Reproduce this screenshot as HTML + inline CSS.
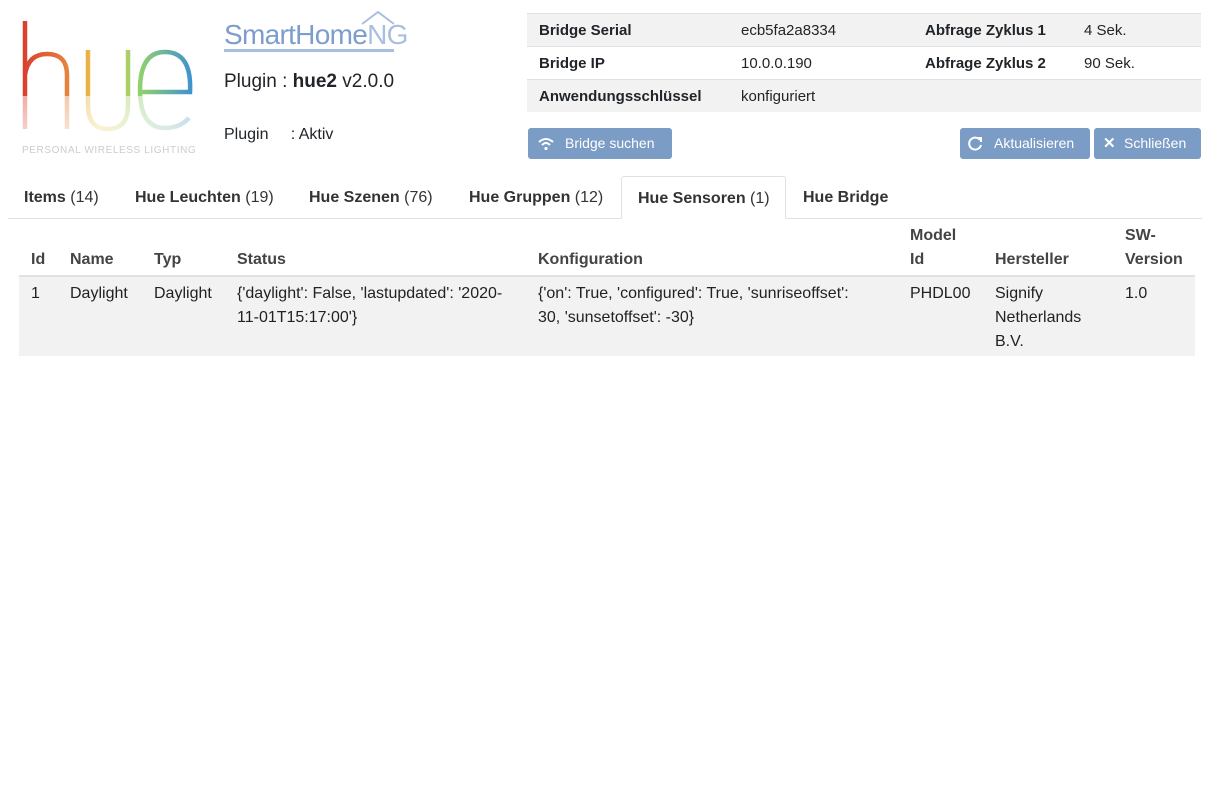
<!DOCTYPE html>
<html><head><meta charset="utf-8"><style>
body{margin:0;background:#fff;font-family:"Liberation Sans",Arial,sans-serif;color:#212529;font-size:15px;width:1211px;height:803px;position:relative;overflow:hidden}
.abs{position:absolute}
table.info{position:absolute;left:527px;top:13px;width:674px;border-collapse:collapse}
table.info td{height:32px;padding:0 0 0 12px;border-top:1px solid #dee2e6;font-size:15px}
table.info tr:nth-child(odd){background:#f2f2f2}
.btn{position:absolute;top:128px;height:31px;background:#7b9cc5;color:#fff;border-radius:3px;font-size:14px;line-height:31px;box-sizing:border-box}
.tabs{position:absolute;left:8px;top:176px;width:1194px;height:42px;border-bottom:1px solid #dee2e6}
.tab{position:absolute;top:0;height:42px;line-height:44px;font-size:16px;font-weight:bold;color:#333}
.tab span{font-weight:normal}
.tab.act{border:1px solid #dee2e6;border-bottom:1px solid #fff;background:#fff;border-radius:3px 3px 0 0;box-sizing:border-box;height:43px}
.th{position:absolute;font-weight:bold;font-size:16px;color:#444;line-height:24px}
.td{position:absolute;font-size:16px;line-height:24px;color:#222}
</style></head><body>
<svg class="abs" style="left:18px;top:18px" width="182" height="140" viewBox="18 18 182 140">
<defs><linearGradient id="g" x1="20" x2="195" y1="0" y2="0" gradientUnits="userSpaceOnUse">
<stop offset="0" stop-color="#d93a2b"/><stop offset=".3" stop-color="#e88a40"/><stop offset=".45" stop-color="#e8cf50"/><stop offset=".7" stop-color="#8ccf70"/><stop offset="1" stop-color="#3b8ed6"/></linearGradient>
<linearGradient id="w" x1="0" x2="0" y1="90" y2="130" gradientUnits="userSpaceOnUse"><stop offset="0" stop-color="#fff" stop-opacity="0"/><stop offset=".05" stop-color="#fff" stop-opacity=".55"/><stop offset="1" stop-color="#fff" stop-opacity=".75"/></linearGradient></defs>
<g fill="none" stroke="url(#g)" stroke-width="4.5">
<path d="M25 21V129M25 75Q28 54 47 54Q67 54 67 75V129"/>
<path d="M88 50V105Q88 129 108 129Q128 129 128 105V50"/>
<path d="M140 92H190Q192 52 165 52Q140 52 140 90Q140 128 165 128Q180 128 189 118"/>
</g>
<rect x="18" y="96" width="182" height="40" fill="url(#w)"/>
<text x="22" y="153" font-size="10" fill="#ccc" letter-spacing="0.3" textLength="174" font-family="Liberation Sans">PERSONAL WIRELESS LIGHTING</text>
</svg>
<div class="abs" style="left:224px;top:19px;font-size:28px;color:#7d9dcc;letter-spacing:-.7px">SmartHome<span style="color:#a9bfdf">NG</span></div>
<div class="abs" style="left:224px;top:49px;width:170px;height:3px;background:#a9bfdf"></div>
<svg class="abs" style="left:360px;top:10px" width="38" height="16"><path d="M2 14L18 2L34 14" fill="none" stroke="#a9bfdf" stroke-width="2"/></svg>
<div class="abs" style="left:224px;top:71px;font-size:19px">Plugin : <b>hue2</b> v2.0.0</div>
<div class="abs" style="left:224px;top:126px;font-size:16px">Plugin&nbsp;&nbsp;&nbsp;&nbsp;&nbsp;: Aktiv</div>
<table class="info">
<tr><td style="width:190px"><b>Bridge Serial</b></td><td style="width:172px">ecb5fa2a8334</td><td style="width:147px"><b>Abfrage Zyklus 1</b></td><td>4 Sek.</td></tr>
<tr><td><b>Bridge IP</b></td><td>10.0.0.190</td><td><b>Abfrage Zyklus 2</b></td><td>90 Sek.</td></tr>
<tr><td><b>Anwendungsschlüssel</b></td><td>konfiguriert</td><td></td><td></td></tr>
</table>
<div class="btn" style="left:528px;width:144px;padding-left:37px">Bridge suchen</div>
<svg class="abs" style="left:537px;top:136px" width="18" height="15"><g fill="none" stroke="#fff" stroke-width="2"><path d="M2 6Q9 0 16 6"/><path d="M5 9Q9 5 13 9"/></g><circle cx="9" cy="12.5" r="1.6" fill="#fff"/></svg>
<div class="btn" style="left:960px;width:130px;padding-left:34px">Aktualisieren</div>
<svg class="abs" style="left:968px;top:136px" width="16" height="15"><path d="M12 4A6 6 0 1 0 13 9" fill="none" stroke="#fff" stroke-width="2"/><path d="M9 2H13V6" fill="none" stroke="#fff" stroke-width="2"/></svg>
<div class="btn" style="left:1094px;width:107px;padding-left:30px">Schließen</div>
<div class="abs" style="left:1103px;top:134px;color:#fff;font-size:15px;font-weight:bold">✕</div>
<div class="tabs">
<div class="tab" style="left:16px">Items <span>(14)</span></div>
<div class="tab" style="left:127px">Hue Leuchten <span>(19)</span></div>
<div class="tab" style="left:301px">Hue Szenen <span>(76)</span></div>
<div class="tab" style="left:461px">Hue Gruppen <span>(12)</span></div>
<div class="tab act" style="left:613px;width:165px;padding-left:16px">Hue Sensoren <span>(1)</span></div>
<div class="tab" style="left:795px">Hue Bridge</div>
</div>
<div class="th" style="left:31px;top:248px">Id</div>
<div class="th" style="left:70px;top:248px">Name</div>
<div class="th" style="left:154px;top:248px">Typ</div>
<div class="th" style="left:237px;top:248px">Status</div>
<div class="th" style="left:538px;top:248px">Konfiguration</div>
<div class="th" style="left:910px;top:224px">Model<br>Id</div>
<div class="th" style="left:995px;top:248px">Hersteller</div>
<div class="th" style="left:1125px;top:224px">SW-<br>Version</div>
<div class="abs" style="left:19px;top:275px;width:1176px;height:2px;background:#dee2e6"></div>
<div class="abs" style="left:19px;top:277px;width:1176px;height:79px;background:#f2f2f2"></div>
<div class="td" style="left:31px;top:282px">1</div>
<div class="td" style="left:70px;top:282px">Daylight</div>
<div class="td" style="left:154px;top:282px">Daylight</div>
<div class="td" style="left:237px;top:282px">{'daylight': False, 'lastupdated': '2020-<br>11-01T15:17:00'}</div>
<div class="td" style="left:538px;top:282px">{'on': True, 'configured': True, 'sunriseoffset':<br>30, 'sunsetoffset': -30}</div>
<div class="td" style="left:910px;top:282px">PHDL00</div>
<div class="td" style="left:995px;top:282px">Signify<br>Netherlands<br>B.V.</div>
<div class="td" style="left:1125px;top:282px">1.0</div>
</body></html>
